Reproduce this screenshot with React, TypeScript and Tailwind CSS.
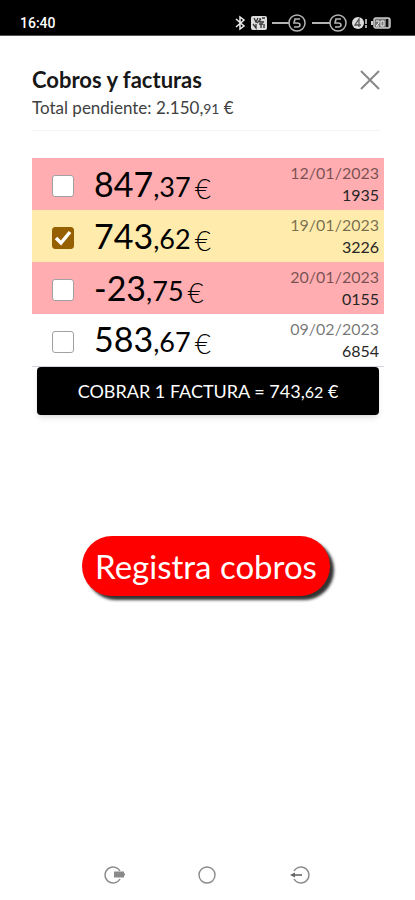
import { useState } from "react";

const invoices = [
  { id: "1935", whole: "847", cents: "37", date: "12/01/2023", overdue: true },
  { id: "3226", whole: "743", cents: "62", date: "19/01/2023", overdue: true },
  { id: "0155", whole: "-23", cents: "75", date: "20/01/2023", overdue: true },
  { id: "6854", whole: "583", cents: "67", date: "09/02/2023", overdue: false },
];

function StatusBar() {
  return (
    <div className="flex h-9 items-end justify-between border-b border-neutral-600 bg-black pr-6 pb-[2px] pl-5 text-white">
      <span className="font-['Roboto',sans-serif] text-sm leading-5 font-medium">
        16:40
      </span>
      <svg
        className="h-5 w-[156px]"
        viewBox="0 0 156 20"
        fill="none"
        stroke="#b4b4b4"
        aria-hidden="true"
      >
        {/* bluetooth */}
        <path d="M1 6l8 7-4 3V4l4 3-8 7" stroke="#eee" strokeWidth="1.5" />
        {/* volte */}
        <rect x="16" y="3" width="16" height="14" rx="2" fill="#dedede" stroke="none" />
        <path
          d="M19 5l2 4 2-4M25 5v4h4M27 5h3M18 11l3 4v-4M24 11h4M26 11v4M29 11v4M22 10l4-4"
          stroke="#333"
          strokeWidth="1.3"
        />
        {/* lines with coin */}
        <path d="M37 10h17M77 10h18" strokeWidth="2" />
        <circle cx="62" cy="10" r="8" strokeWidth="1.5" />
        <circle cx="103" cy="10" r="8" strokeWidth="1.5" />
        <path
          d="M65 6h-5l-1 4h3q3 0 3 2t-3 2h-3M106 6h-5l-1 4h3q3 0 3 2t-3 2h-3"
          strokeWidth="1.6"
        />
        {/* mobile data */}
        <circle cx="123" cy="10" r="6" fill="#dedede" stroke="none" />
        <path d="M124 14V6l-4 6h6" stroke="#555" strokeWidth="1.3" />
        <path d="M131 6v5M131 12v3" stroke="#dedede" strokeWidth="1.5" />
        {/* battery */}
        <rect x="139" y="5" width="16" height="10" rx="2" fill="#777" stroke="#ccc" strokeWidth="1.5" />
        <path d="M137 8v4" stroke="#ccc" strokeWidth="2" />
        <path d="M141 8h3v2l-3 3h3M146 8v5h3V8h-3" stroke="#eee" />
        <path d="M152 6v8" stroke="#111" strokeWidth="2" />
      </svg>
    </div>
  );
}

function NavigationBar() {
  return (
    <nav className="mt-auto flex items-center justify-center gap-[71px] pr-[2px] pb-[14px]">
      <button type="button" aria-label="Recientes">
        <svg className="size-[22px]" viewBox="0 0 22 22" fill="none" stroke="#8a8a8a">
          <path d="M17 7a8 8 0 1 0 0 8" strokeWidth="1.4" />
          <path d="M11 8.5h10M11 10.5h11M11 12.5h10" stroke="#8a8a8a" strokeWidth="1.8" />
        </svg>
      </button>
      <button type="button" aria-label="Inicio">
        <svg className="size-[22px]" viewBox="0 0 22 22" fill="none" stroke="#8a8a8a">
          <circle cx="11" cy="11" r="8" strokeWidth="1.4" />
        </svg>
      </button>
      <button type="button" aria-label="Salir">
        <svg className="size-[22px]" viewBox="0 0 22 22" fill="none" stroke="#8a8a8a">
          <path d="M5 7a8 8 0 1 1 0 8" strokeWidth="1.4" />
          <path d="M13 11H3" stroke="#666" strokeWidth="1.6" />
          <path d="M1 11l5-2.5v5z" fill="#666" stroke="none" />
        </svg>
      </button>
    </nav>
  );
}

export default function App() {
  const [selected, setSelected] = useState<string[]>(["3226"]);

  const toggle = (id: string) => {
    setSelected((prev) =>
      prev.includes(id) ? prev.filter((item) => item !== id) : [...prev, id]
    );
  };

  const total = invoices
    .filter((invoice) => selected.includes(invoice.id))
    .reduce((sum, invoice) => sum + Number(`${invoice.whole}.${invoice.cents}`), 0);
  const [whole, cents] = total.toFixed(2).split(".");

  return (
    <div className="flex min-h-screen flex-col bg-white font-['Lato',sans-serif] text-black">
      <StatusBar />
      <main className="pt-[30px] pr-[31px] pl-8">
        <header className="mr-1 flex items-start justify-between border-b border-gray-100 pb-2">
          <div>
            <h1 className="text-[22px] leading-7 font-bold text-neutral-900">
              Cobros y facturas
            </h1>
            <p className="text-[17px] leading-7 text-neutral-700">
              Total pendiente: 2.150,<span className="text-sm">91</span> €
            </p>
          </div>
          <button type="button" aria-label="Cerrar" className="mt-1">
            <svg
              className="size-5"
              viewBox="0 0 20 20"
              fill="none"
              stroke="#888"
              strokeWidth="2"
            >
              <path d="M1 1l18 18M19 1L1 19" />
            </svg>
          </button>
        </header>

        <table className="mt-[27px] w-full border-b border-gray-300">
          <tbody>
            {invoices.map((invoice) => {
              const checked = selected.includes(invoice.id);
              const color = checked
                ? "bg-[#ffebab]"
                : invoice.overdue
                  ? "bg-[#ffadb0]"
                  : "bg-white";
              return (
                <tr key={invoice.id} className={`h-[52px] ${color}`}>
                  <td className="w-[62px] p-0 pt-1 pl-5">
                    <label className="relative block size-[22px]">
                      <input
                        type="checkbox"
                        checked={checked}
                        onChange={() => toggle(invoice.id)}
                        aria-label={`Factura ${invoice.id}`}
                        className="block size-[22px] appearance-none rounded-[3px] border border-neutral-400 bg-white checked:border-[#966000] checked:bg-[#966000]"
                      />
                      {checked && (
                        <svg
                          className="pointer-events-none absolute inset-0 size-[22px]"
                          viewBox="0 0 22 22"
                          fill="none"
                          stroke="white"
                          strokeWidth="3.5"
                        >
                          <path d="M4 11l5 5 9-11" />
                        </svg>
                      )}
                    </label>
                  </td>
                  <td className="p-0 pt-0.5 text-[34px] leading-10 whitespace-nowrap">
                    {invoice.whole}
                    <span className="text-[27px]">,{invoice.cents}</span>
                    <span className="relative top-0.5 ml-1 text-[28px] font-light">€</span>
                  </td>
                  <td className="p-0 pr-[5px] text-right text-base leading-[22px]">
                    <div className="text-black/55">{invoice.date}</div>
                    <div className="text-neutral-800">{invoice.id}</div>
                  </td>
                </tr>
              );
            })}
          </tbody>
        </table>

        <button
          type="button"
          className="mx-[5px] flex h-12 w-[calc(100%-10px)] items-center justify-center rounded-sm bg-black text-lg text-white shadow-md"
        >
          <span>
            COBRAR {selected.length} {selected.length === 1 ? "FACTURA" : "FACTURAS"} = {whole},
            <span className="text-base">{cents}</span> €
          </span>
        </button>

        <div className="mt-[121px] mr-1 flex justify-center">
          <button
            type="button"
            className="h-[60px] rounded-full bg-[#ff0000] px-[13px] text-[33px] leading-[58px] text-white shadow-[4px_4px_3px_#333]"
          >
            Registra cobros
          </button>
        </div>
      </main>
      <NavigationBar />
    </div>
  );
}
